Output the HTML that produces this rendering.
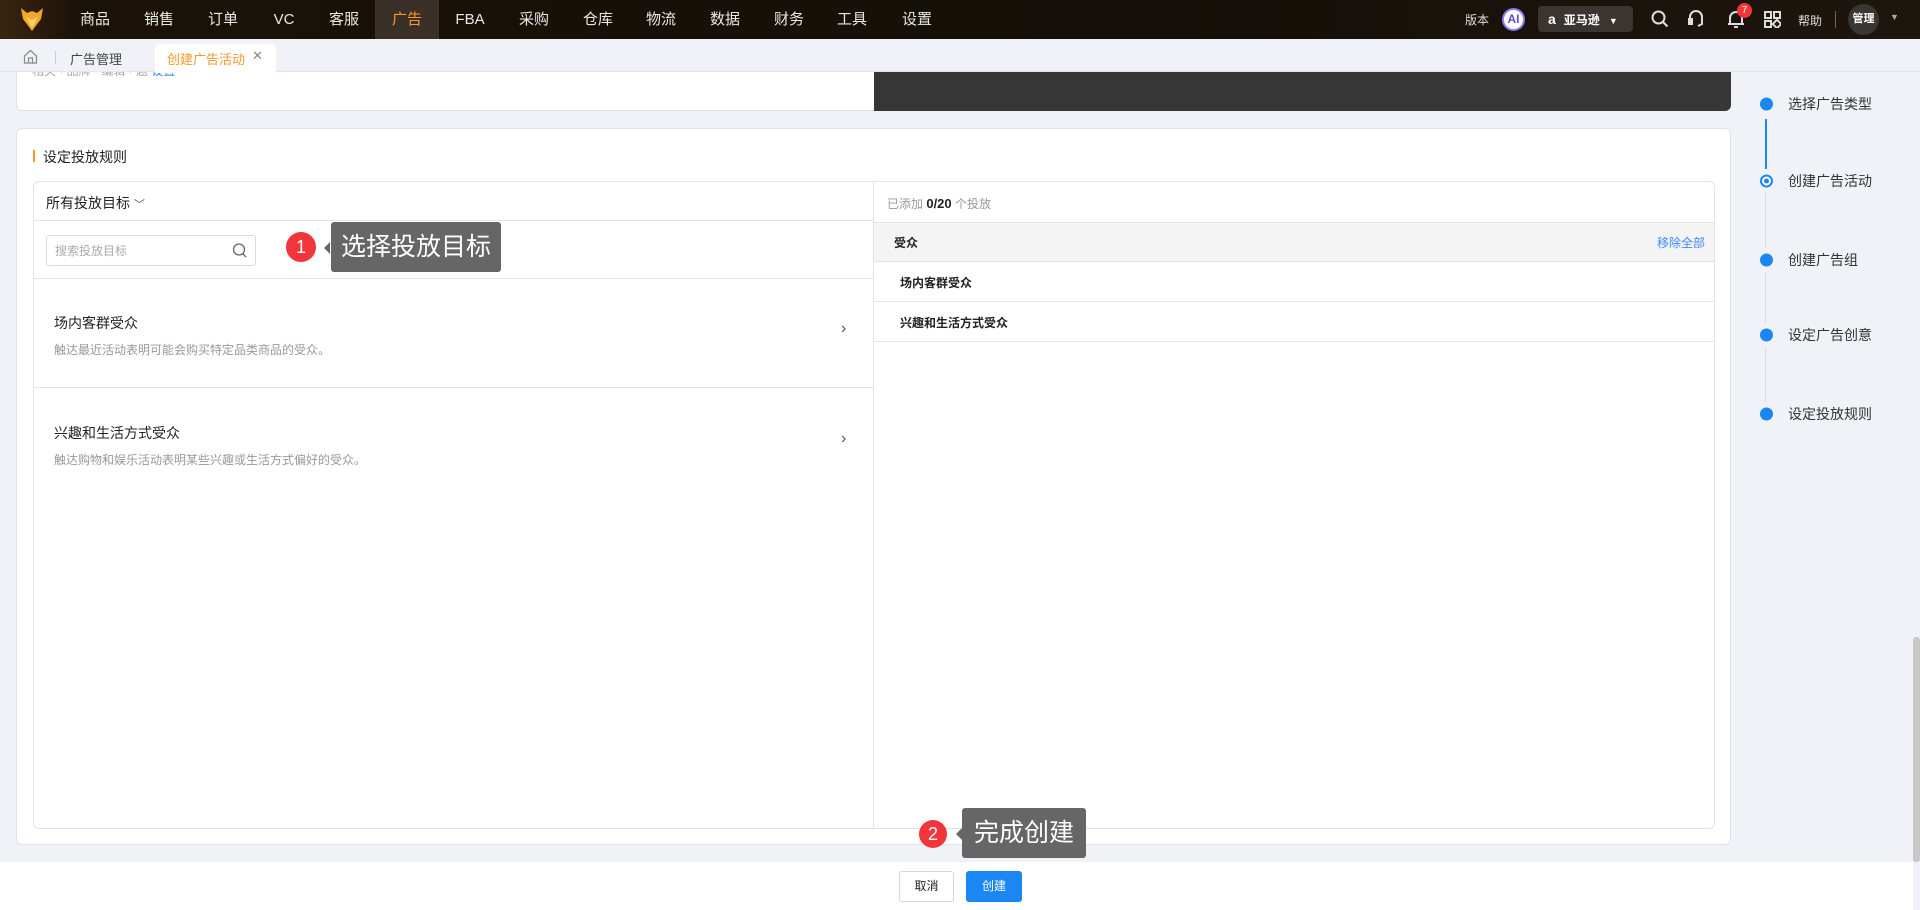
<!DOCTYPE html>
<html><head><meta charset="utf-8"><style>
*{box-sizing:border-box;margin:0;padding:0}
body{width:1920px;height:910px;overflow:hidden;background:#f0f2f7;font-family:"Liberation Sans","Noto Sans CJK SC",sans-serif;position:relative;color:#333}
.abs{position:absolute}
.nav{left:0;top:0;width:1920px;height:39px;background:linear-gradient(90deg,#3a2510 0%,#1a1208 4%,#140f08 60%,#1d160e 100%)}
.nav .it{position:absolute;top:0;height:39px;line-height:39px;color:#e8e8e8;font-size:15px;transform:translateX(-50%)}
.card{background:#fff;border:1px solid #dfe3ea;border-radius:6px}
.step{position:absolute;left:1788px;font-size:14px;color:#333;transform:translateY(-50%)}
.dot{position:absolute;left:1760px;width:13px;height:13px;border-radius:50%;background:#1a87f5;transform:translateY(-50%)}
.tip{background:#666;color:#fff;border-radius:3px;font-size:25px;text-align:center}
.badge{background:#f2353b;color:#fff;border-radius:50%;text-align:center;font-size:18px}
</style></head><body>
<div class="abs nav">
 <svg class="abs" style="left:20px;top:7px" width="24" height="26" viewBox="0 0 24 26"><path d="M1 1 L7 6 L12 4 L17 6 L23 1 L21 12 L12 24 L3 12 Z" fill="#f5a623"/><path d="M6 10 L12 21 L18 10 L12 13 Z" fill="#ffd27a"/></svg>
 <div class="abs" style="left:375px;top:0;width:64px;height:39px;background:#3a3028"></div>
 <span class="it" style="left:95px">商品</span><span class="it" style="left:159px">销售</span><span class="it" style="left:223px">订单</span><span class="it" style="left:284px">VC</span><span class="it" style="left:344px">客服</span><span class="it" style="left:407px;color:#f5972a">广告</span><span class="it" style="left:470px">FBA</span><span class="it" style="left:534px">采购</span><span class="it" style="left:598px">仓库</span><span class="it" style="left:661px">物流</span><span class="it" style="left:725px">数据</span><span class="it" style="left:789px">财务</span><span class="it" style="left:852px">工具</span><span class="it" style="left:917px">设置</span>
 <span class="abs" style="left:1465px;top:11px;color:#ddd;font-size:12px">版本</span>
 <div class="abs" style="left:1502px;top:8px;width:23px;height:23px;border-radius:50%;background:#fff;border:2px solid #8a7cf5;color:#5b4ae0;font-weight:bold;font-size:12px;text-align:center;line-height:19px">AI</div>
 <div class="abs" style="left:1538px;top:6px;width:95px;height:26px;border-radius:4px;background:#3a3530;color:#fff;font-size:12px;line-height:26px;font-weight:bold"><span style="margin-left:10px;font-size:14px">a</span><span style="margin-left:8px">亚马逊</span><span style="margin-left:9px;font-size:9px">▼</span></div>
 <svg class="abs" style="left:1651px;top:10px" width="18" height="18" viewBox="0 0 18 18" fill="none" stroke="#ddd" stroke-width="2"><circle cx="7.5" cy="7.5" r="6"/><path d="M12 12 L16.5 16.5"/></svg>
 <svg class="abs" style="left:1687px;top:9px" width="18" height="20" viewBox="0 0 18 20" fill="none" stroke="#ddd" stroke-width="2"><path d="M3 11 V8 a6 6 0 0 1 12 0 V11"/><rect x="2" y="10" width="3" height="5" fill="#ddd"/><path d="M15 11 V15 L11 17"/></svg>
 <svg class="abs" style="left:1727px;top:9px" width="18" height="20" viewBox="0 0 18 20" fill="none" stroke="#ddd" stroke-width="2"><path d="M3 15 V9 a6 6 0 0 1 12 0 V15 Z M1 15 H17 M7 18 H11"/></svg>
 <div class="abs" style="left:1737px;top:3px;width:15px;height:15px;border-radius:50%;background:#f2353b;color:#fff;font-size:10px;text-align:center;line-height:15px">7</div>
 <svg class="abs" style="left:1764px;top:11px" width="17" height="17" viewBox="0 0 17 17" fill="none" stroke="#ddd" stroke-width="2"><rect x="1" y="1" width="6" height="6"/><rect x="10" y="1" width="6" height="6"/><rect x="1" y="10" width="6" height="6"/><rect x="10" y="10" width="6" height="6" transform="rotate(45 13 13)"/></svg>
 <span class="abs" style="left:1798px;top:12px;color:#ddd;font-size:12px">帮助</span>
 <div class="abs" style="left:1835px;top:11px;width:1px;height:17px;background:#666"></div>
 <div class="abs" style="left:1848px;top:4px;width:31px;height:31px;border-radius:50%;background:#3a3632;color:#fff;font-size:11px;text-align:center;line-height:31px;font-weight:bold">管理</div>
 <span class="abs" style="left:1890px;top:12px;color:#aaa;font-size:9px">▼</span>
</div>
<div class="abs card" style="left:16px;top:71px;width:1715px;height:40px;border-top:none;border-radius:0 0 6px 6px"></div>
<div class="abs" style="left:874px;top:72px;width:857px;height:39px;background:#363636;border-radius:0 0 6px 0"></div>
<span class="abs" style="left:32px;top:62px;font-size:12px;color:#aaa">相关 · 品牌 · 编辑 · 题 <span style="color:#3d8af7">设置</span></span>
<div class="abs" style="left:0;top:39px;width:1920px;height:33px;background:#f0f2f7;border-bottom:1px solid #e5e7eb"></div>
<svg class="abs" style="left:23px;top:49px" width="15" height="15" viewBox="0 0 15 15" fill="none" stroke="#888" stroke-width="1.2"><path d="M1.5 7 L7.5 1.5 L13.5 7 V14 H1.5 Z M5.5 14 V9 H9.5 V14"/></svg>
<div class="abs" style="left:55px;top:51px;width:1px;height:13px;background:#ccc"></div>
<span class="abs" style="left:70px;top:49px;font-size:13px;color:#444">广告管理</span>
<div class="abs" style="left:155px;top:44px;width:121px;height:29px;background:#fff;border-radius:4px 4px 0 0"></div>
<span class="abs" style="left:167px;top:49px;font-size:13px;color:#f5972a">创建广告活动</span>
<span class="abs" style="left:252px;top:48px;font-size:13px;color:#888">✕</span>
<div class="abs card" style="left:16px;top:128px;width:1715px;height:717px"></div>
<div class="abs" style="left:33px;top:150px;width:2px;height:12px;background:#f5972a"></div>
<span class="abs" style="left:43px;top:147px;font-size:14px;color:#222">设定投放规则</span>
<div class="abs" style="left:33px;top:181px;width:1682px;height:648px;border:1px solid #dfe3ea;border-radius:6px;background:#fff"></div>
<div class="abs" style="left:873px;top:181px;width:1px;height:647px;background:#dfe3ea"></div>
<div class="abs" style="left:34px;top:220px;width:839px;height:1px;background:#dfe3ea"></div>
<span class="abs" style="left:46px;top:193px;font-size:14px;color:#222">所有投放目标 <span style="font-size:11px;color:#555">﹀</span></span>
<div class="abs" style="left:46px;top:235px;width:210px;height:31px;border:1px solid #d6dae0;border-radius:3px"></div>
<span class="abs" style="left:55px;top:242px;font-size:12px;color:#aaa">搜索投放目标</span>
<svg class="abs" style="left:232px;top:242px" width="16" height="17" viewBox="0 0 16 17" fill="none" stroke="#666" stroke-width="1.3"><circle cx="7" cy="7.5" r="5.5"/><path d="M11 12 L14 15"/></svg>
<div class="abs" style="left:34px;top:278px;width:839px;height:1px;background:#dfe3ea"></div>
<span class="abs" style="left:54px;top:313px;font-size:14px;color:#222">场内客群受众</span>
<span class="abs" style="left:54px;top:341px;font-size:12px;color:#999">触达最近活动表明可能会购买特定品类商品的受众。</span>
<span class="abs" style="left:841px;top:320px;font-size:16px;color:#555">›</span>
<div class="abs" style="left:34px;top:387px;width:839px;height:1px;background:#dfe3ea"></div>
<span class="abs" style="left:54px;top:423px;font-size:14px;color:#222">兴趣和生活方式受众</span>
<span class="abs" style="left:54px;top:451px;font-size:12px;color:#999">触达购物和娱乐活动表明某些兴趣或生活方式偏好的受众。</span>
<span class="abs" style="left:841px;top:430px;font-size:16px;color:#555">›</span>
<span class="abs" style="left:887px;top:195px;font-size:12px;color:#999">已添加 <b style="color:#222;font-size:13px">0/20</b> 个投放</span>
<div class="abs" style="left:874px;top:222px;width:840px;height:40px;background:#f4f4f4;border-top:1px solid #e3e3e3;border-bottom:1px solid #e3e3e3"></div>
<span class="abs" style="left:894px;top:234px;font-size:12px;color:#222;font-weight:bold">受众</span>
<span class="abs" style="left:1657px;top:234px;font-size:12px;color:#3d8af7">移除全部</span>
<span class="abs" style="left:900px;top:274px;font-size:12px;color:#222;font-weight:bold">场内客群受众</span>
<div class="abs" style="left:874px;top:301px;width:840px;height:1px;background:#e3e3e3"></div>
<span class="abs" style="left:900px;top:314px;font-size:12px;color:#222;font-weight:bold">兴趣和生活方式受众</span>
<div class="abs" style="left:874px;top:341px;width:840px;height:1px;background:#e3e3e3"></div>
<div class="abs badge" style="left:286px;top:232px;width:30px;height:30px;line-height:30px">1</div>
<div class="abs" style="left:324px;top:242px;border:6px solid transparent;border-right-color:#666;border-left:0"></div>
<div class="abs tip" style="left:331px;top:222px;width:170px;height:50px;line-height:50px">选择投放目标</div>
<div class="abs badge" style="left:919px;top:820px;width:28px;height:28px;line-height:28px">2</div>
<div class="abs" style="left:956px;top:828px;border:6px solid transparent;border-right-color:#666;border-left:0"></div>
<div class="abs tip" style="left:962px;top:808px;width:124px;height:50px;line-height:50px">完成创建</div>
<div class="abs" style="left:0;top:862px;width:1913px;height:48px;background:#fff"></div>
<div class="abs" style="left:899px;top:871px;width:55px;height:31px;border:1px solid #d6d6d6;border-radius:3px;background:#fff;font-size:12px;text-align:center;line-height:29px;color:#222">取消</div>
<div class="abs" style="left:966px;top:871px;width:56px;height:31px;border-radius:3px;background:#1a87f5;font-size:12px;text-align:center;line-height:31px;color:#fff">创建</div>
<div class="abs" style="left:1765px;top:119px;width:2px;height:50px;background:#1a87f5"></div>
<div class="abs" style="left:1765px;top:193px;width:1px;height:55px;background:#d8dce3"></div>
<div class="abs" style="left:1765px;top:272px;width:1px;height:51px;background:#d8dce3"></div>
<div class="abs" style="left:1765px;top:347px;width:1px;height:55px;background:#d8dce3"></div>
<div class="dot" style="top:104px"></div>
<div class="dot" style="top:181px;background:#fff;border:2px solid #1a87f5"><div style="margin:2px;width:5px;height:5px;border-radius:50%;background:#1a87f5"></div></div>
<div class="dot" style="top:260px"></div><div class="dot" style="top:335px"></div><div class="dot" style="top:414px"></div>
<span class="step" style="top:104px">选择广告类型</span>
<span class="step" style="top:181px">创建广告活动</span>
<span class="step" style="top:260px">创建广告组</span>
<span class="step" style="top:335px">设定广告创意</span>
<span class="step" style="top:414px">设定投放规则</span>
<div class="abs" style="left:1913px;top:637px;width:7px;height:225px;background:#c8c8c8;border-radius:3px"></div>
</body></html>
